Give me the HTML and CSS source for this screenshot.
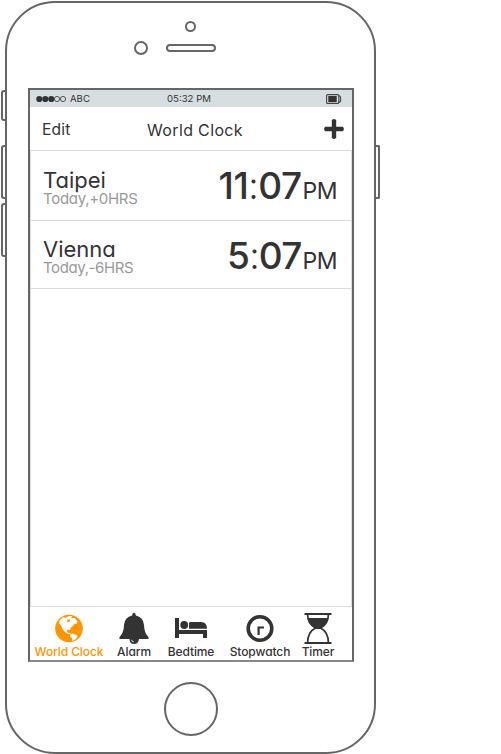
FILE: index.html
```html
<!DOCTYPE html>
<html lang="en">
<head>
<meta charset="utf-8">
<title>World Clock</title>
<link rel="stylesheet" href="styles.css">
</head>
<body>
<div class="phone">
  <i class="side mute"></i><i class="side vol-up"></i><i class="side vol-down"></i><i class="side power"></i>
  <div class="top">
    <span class="sensor"></span>
    <div class="ear"><span class="camera"></span><span class="speaker"></span></div>
  </div>
  <main class="screen">
    <div class="status">
      <div class="carrier">
        <svg width="31" height="8" viewBox="0 0 31 8"><g fill="#333"><circle cx="3.3" cy="4" r="3.1"/><circle cx="9.3" cy="4" r="3.1"/><circle cx="15.3" cy="4" r="3.1"/></g><g fill="none" stroke="#444" stroke-width=".9"><circle cx="21" cy="4" r="2.6"/><circle cx="27" cy="4" r="2.6"/></g></svg>
        <span class="abc">ABC</span>
      </div>
      <span class="clock">05:32 PM</span>
      <svg class="battery" width="16" height="10" viewBox="0 0 16 10"><rect x=".6" y=".6" width="12.2" height="8.8" rx="1" fill="none" stroke="#444" stroke-width="1.1"/><rect x="2.3" y="2" width="8.4" height="6" fill="#333"/><path d="M12.8 1.8Q15 2 14.6 5Q15 8 12.8 8.4" fill="none" stroke="#444" stroke-width="1.1"/></svg>
    </div>
    <header class="nav">
      <span class="edit">Edit</span>
      <h1>World Clock</h1>
      <svg class="plus" width="20" height="20" viewBox="0 0 20 20"><path d="M10 1.8V18.2M1.8 10H18.2" stroke="#333" stroke-width="3.4" stroke-linecap="round" stroke-linejoin="round"/><path d="M10 .8V19.2M.8 10H19.2" stroke="#333" stroke-width="4.4"/></svg>
    </header>
    <section class="row">
      <div class="place"><h2 class="taipei">Taipei</h2><p class="off1">Today,+0HRS</p></div>
      <div class="time"><b class="t1">11<i>:</i>07</b><span>PM</span></div>
    </section>
    <section class="row second">
      <div class="place"><h2 class="vienna">Vienna</h2><p class="off2">Today,-6HRS</p></div>
      <div class="time"><b class="t2">5<i>:</i>07</b><span>PM</span></div>
    </section>
    <div class="empty"></div>
    <nav class="tabs">
      <div class="tab active">
        <svg width="30" height="34" viewBox="0 0 30 34"><circle cx="15" cy="17.5" r="13.8" fill="#ff9500"/><path fill="#fff" d="M5.5 9.5L9 6.3L12 6.8L14 5.2L18.5 5L17 7.2L20.5 7L23.5 10.5L22.5 13L20.5 12.6L18.8 15.2L16.8 16.5L16 19L13.8 18.4L12.6 20L14 21.6L17 22.4L15.3 23.2L11.5 21.4L8.5 18L7 14.5L5.2 12.5Z"/><path fill="#fff" d="M16.2 23L19 22.4L23.8 25L21.5 28.4L18.3 30L18 27L16 25.4Z"/><path fill="#ff9500" d="M13.2 8.6L16.2 8.4L15.6 10.6L13.6 11.4Z"/></svg>
        <span>World Clock</span>
      </div>
      <div class="tab alarm">
        <svg width="30" height="34" viewBox="0 0 30 34"><path fill="#333" d="M13.2 4.5Q13.2 1.8 15 1.8Q16.8 1.8 16.8 4.5Q24.5 6 25 14Q25.2 22 29.5 26V28H20Q19.5 33 15 33Q10.5 33 10.5 28H.5V26Q4.8 22 5 14Q5.5 6 13.2 4.5Z"/><path d="M12.6 28.8Q12.9 31 14.8 31" fill="none" stroke="#fff" stroke-width=".9"/></svg>
        <span>Alarm</span>
      </div>
      <div class="tab bed">
        <svg width="34" height="34" viewBox="0 0 34 34"><path fill="#333" d="M1 7H5V19H33V27H29V23H5V27H1Z"/><circle cx="10.2" cy="14" r="3.9" fill="#333"/><path fill="#333" d="M15 17.8V12.3Q15 11 16.5 11H27Q33 11.3 33 17.8Z"/></svg>
        <span>Bedtime</span>
      </div>
      <div class="tab stop">
        <svg width="30" height="34" viewBox="0 0 30 34"><circle cx="15" cy="17.5" r="11.8" fill="none" stroke="#333" stroke-width="3.6"/><path d="M13.6 24V16.5H19" fill="none" stroke="#333" stroke-width="2.2"/></svg>
        <span>Stopwatch</span>
      </div>
      <div class="tab timer">
        <svg width="28" height="34" viewBox="0 0 28 34"><path d="M.5 3H27.5M.5 32H27.5" stroke="#333" stroke-width="2.2"/><path d="M3.6 3Q3.4 13 11.8 16.7Q3.4 21 3.6 32M24.4 3Q24.6 13 16.2 16.7Q24.6 21 24.4 32" fill="none" stroke="#333" stroke-width="1.7"/><path fill="#333" d="M4 7H24Q23 14.5 16.5 18H11.5Q5 14.5 4 7Z"/></svg>
        <span>Timer</span>
      </div>
    </nav>
  </main>
  <div class="home"></div>
</div>
</body>
</html>
```
FILE: styles.css
```css
* { box-sizing: border-box; margin: 0; padding: 0; }
body { width: 501px; height: 754px; background: #fff; overflow: hidden; color: #333; font-family: Inter, "Liberation Sans", sans-serif; font-feature-settings: "cv11"; }
svg { display: block; flex: none; }
.phone { position: relative; width: 371px; height: 753.5px; margin: .5px 0 0 5px; border: 2px solid #666; border-radius: 50px; display: flex; flex-direction: column; align-items: center; }
.side { position: absolute; width: 6px; border: 2px solid #666; left: -6px; border-right: 0; border-radius: 3px 0 0 3px; }
.mute { top: 87.5px; height: 31px; }
.vol-up { top: 142.5px; height: 54px; }
.vol-down { top: 200.5px; height: 54px; }
.power { left: auto; right: -6px; top: 142.5px; height: 54px; border-right: 2px solid #666; border-left: 0; border-radius: 0 2px 2px 0; }
.top { height: 85.5px; width: 100%; display: flex; flex-direction: column; align-items: center; padding-top: 18.5px; flex: none; }
.sensor { width: 11px; height: 11px; border: 2px solid #666; border-radius: 50%; }
.ear { display: flex; align-items: center; gap: 18px; margin: 9px 32px 0 0; height: 14px; }
.camera { width: 14px; height: 14px; border: 2px solid #666; border-radius: 50%; }
.speaker { width: 50px; height: 8px; border: 2px solid #666; border-radius: 4px; }
.screen { width: 326px; height: 574px; flex: none; border: 2px solid #666; border-bottom-color: #888; display: flex; flex-direction: column; margin-left: 1px; }
.status { height: 17px; flex: none; background: #d7dee1; display: grid; grid-template-columns: 1fr auto 1fr; align-items: center; padding: 0 10px 0 6px; font-size: 9.6px; line-height: 16px; }
.carrier { display: flex; align-items: center; gap: 3px; }
.battery { justify-self: end; }
.nav { height: 44px; flex: none; display: grid; grid-template-columns: 1fr auto 1fr; align-items: center; padding: 0 8px 0 12px; border-bottom: 1px solid #d9d9d9; }
.edit { font-size: 15.6px; letter-spacing: .15px; padding-top: 2px; }
.nav h1 { font-size: 16px; font-weight: 400; letter-spacing: .35px; padding: 2px 0 0 4px; }
.plus { justify-self: end; }
.row { height: 70px; flex: none; display: flex; justify-content: space-between; border: 1px solid #dcdcdc; border-top: 0; padding: 17px 14px 0 12px; }
.second { height: 68px; padding-top: 16px; }
.place h2 { font-size: 22px; line-height: 24px; font-weight: 400; }
.place p { font-size: 15px; line-height: 16px; margin-top: -1px; letter-spacing: -.3px; color: #999; }
.place .off2 { letter-spacing: -.4px; }
.time { display: flex; align-items: baseline; height: 40px; line-height: 36px; }
.time b { font-size: 37px; font-weight: 500; letter-spacing: -.8px; }
.time b i { font-style: normal; font-weight: 300; }
.time .t1 { letter-spacing: -.5px; }
.time span { font-size: 23px; font-weight: 400; letter-spacing: -.5px; margin-left: 1px; }
.second .time { line-height: 38px; }
.empty { flex: 1; border: 1px solid #dcdcdc; border-top: 0; }
.tabs { height: 53px; flex: none; display: flex; align-items: flex-start; padding: 4px 0 0 4px; }
.tab { display: flex; flex-direction: column; align-items: center; white-space: nowrap; font-size: 12px; line-height: 14px; font-weight: 500; letter-spacing: -.1px; }
.active { color: #ff9500; width: 70px; }
.alarm { width: 36px; margin-left: 12px; }
.bed { width: 50px; margin-left: 14px; }
.stop { width: 62px; margin-left: 13px; }
.timer { width: 34px; margin-left: 10px; }
.home { width: 54px; height: 54px; border: 2px solid #666; border-radius: 50%; margin: 20px 0 0 1px; flex: none; }
```
